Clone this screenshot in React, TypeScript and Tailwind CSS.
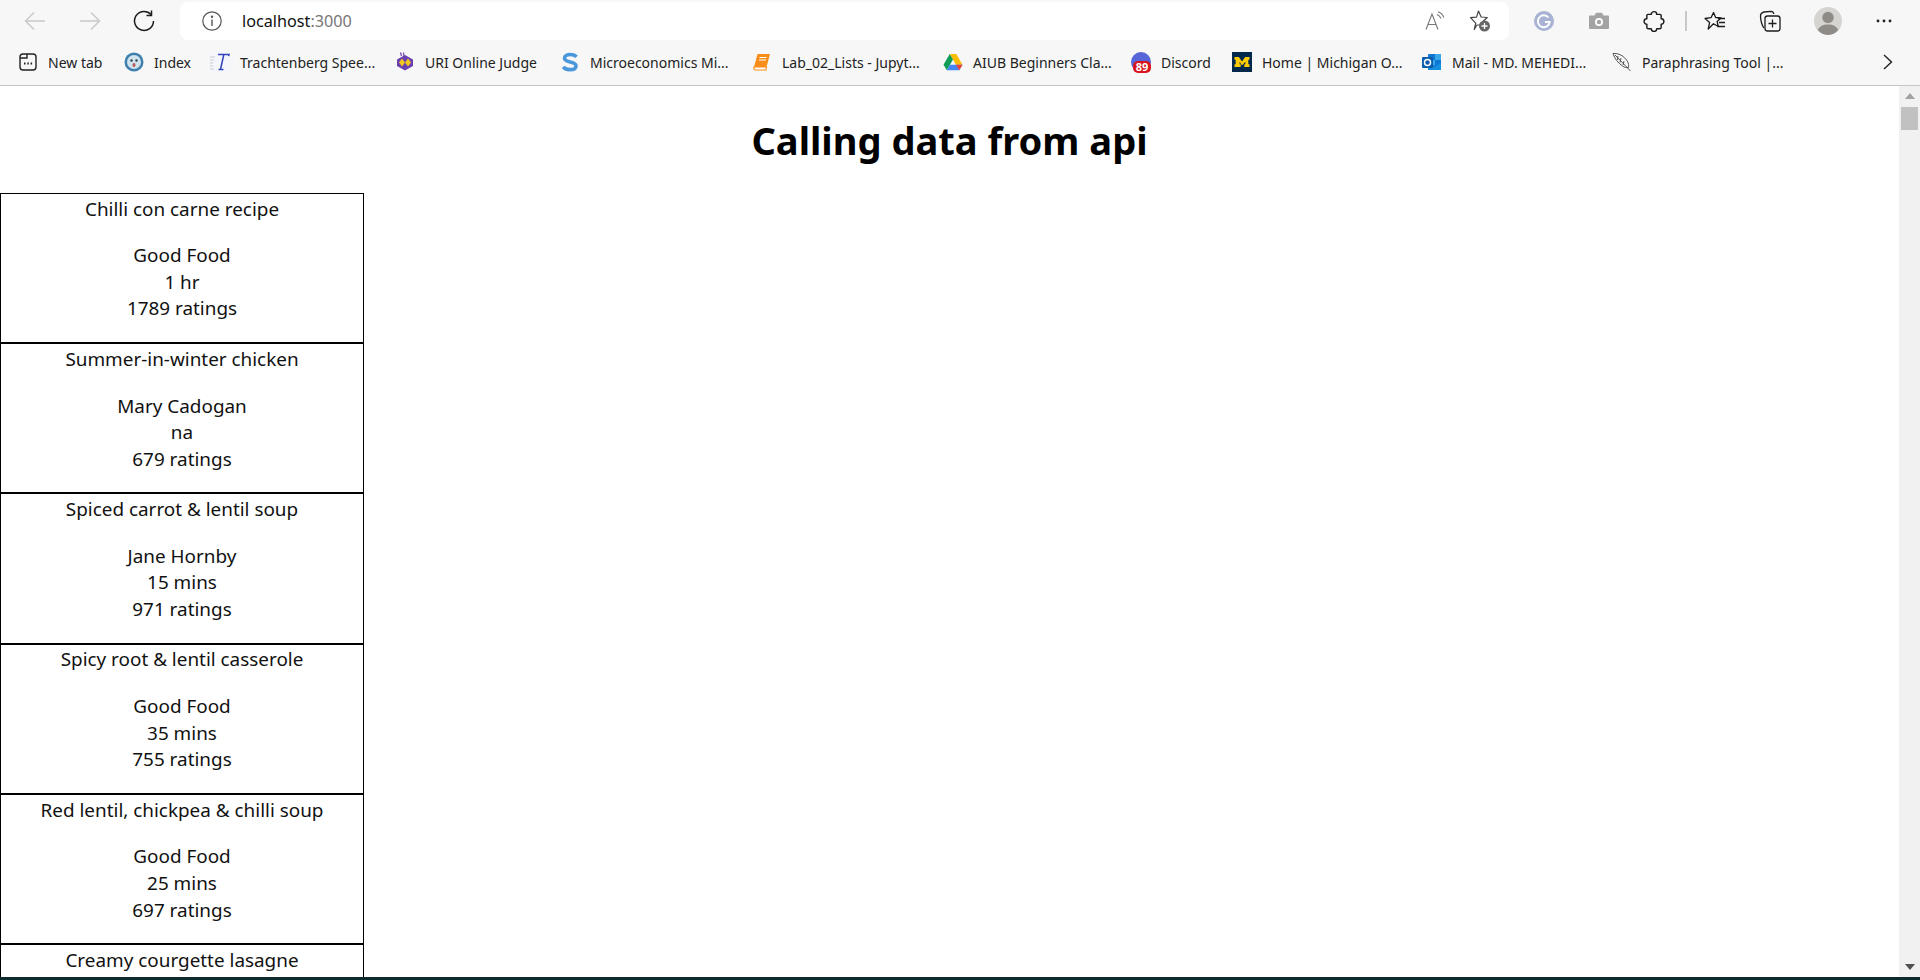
import React from "react";

const UI = { fontFamily: '"Noto Sans", "Open Sans", sans-serif' };

const Back = () => (
  <svg width="22" height="20" viewBox="0 0 22 20" fill="none" stroke="#c9c9c9" strokeWidth="1.4">
    <path d="M21 10H1.5M10 1.5L1.5 10l8.5 8.5" />
  </svg>
);
const Forward = () => (
  <svg width="22" height="20" viewBox="0 0 22 20" fill="none" stroke="#c9c9c9" strokeWidth="1.4">
    <path d="M1 10h19.5M12 1.5l8.5 8.5-8.5 8.5" />
  </svg>
);
const Reload = () => (
  <svg width="22" height="22" viewBox="0 0 22 22" fill="none" stroke="#1c1c1c" strokeWidth="1.5">
    <path d="M18 4.5A9.5 9.5 0 1 0 20.5 11" />
    <path d="M18.5 0.5v5h-5" />
  </svg>
);
const Info = () => (
  <svg width="20" height="20" viewBox="0 0 20 20" fill="none" stroke="#555" strokeWidth="1.2">
    <circle cx="10" cy="10" r="9.2" />
    <path d="M10 8.5v6.5" strokeWidth="1.4" />
    <circle cx="10" cy="5.8" r="0.6" fill="#555" />
  </svg>
);
const ReadAloud = () => (
  <svg width="20" height="20" viewBox="0 0 20 20" fill="none" stroke="#777" strokeWidth="1.1">
    <path d="M1 18.5L7 3l6 15.5M3 13.5h8" />
    <path d="M12 3.5c2 .8 3.2 2 4 4M13 0.8c2.8 1 4.8 3 5.8 5.8" />
  </svg>
);
const FavAdd = () => (
  <svg width="24" height="24" viewBox="0 0 24 24" fill="none">
    <path d="M10.5 2l2.6 6 6.2.5-4.7 4.2 1.3 3.3H9l-1 1.5-1.7 3 1.4-6.3L2.5 8.7l6-.6z" stroke="#444" strokeWidth="1.2" strokeLinejoin="round" />
    <circle cx="16.5" cy="17" r="5.5" fill="#666" />
    <path d="M16.5 14v6M13.5 17h6" stroke="#fff" strokeWidth="1.3" />
  </svg>
);
const Grammarly = () => (
  <svg width="20" height="20" viewBox="0 0 20 20" fill="none">
    <circle cx="10" cy="10" r="10" fill="#a8b2d4" />
    <path d="M14.5 6.5A6 6 0 1 0 15.8 11H11" stroke="#fff" strokeWidth="1.9" />
  </svg>
);
const Camera = () => (
  <svg width="20" height="18" viewBox="0 0 20 18">
    <path d="M1 3.5h4.5L7 .8h6l1.5 2.7H19a1 1 0 0 1 1 1V16a1 1 0 0 1-1 1H1a1 1 0 0 1-1-1V4.5a1 1 0 0 1 1-1z" fill="#a3a3a3" />
    <circle cx="10" cy="10" r="4" fill="#fff" />
    <circle cx="10" cy="10" r="2.2" fill="#a3a3a3" />
  </svg>
);
const Puzzle = () => (
  <svg width="22" height="22" viewBox="0 0 20 20" fill="none" stroke="#1c1c1c" strokeWidth="1.3" strokeLinejoin="round">
    <path d="M7.5 4a2.5 2.5 0 0 1 5 0h3a1 1 0 0 1 1 1v3a2.5 2.5 0 0 1 0 5v3a1 1 0 0 1-1 1h-3a2.5 2.5 0 0 1-5 0h-3a1 1 0 0 1-1-1v-3a2.5 2.5 0 0 1 0-5V5a1 1 0 0 1 1-1z" />
  </svg>
);
const Favorites = () => (
  <svg width="22" height="20" viewBox="0 0 22 20" fill="none" stroke="#1c1c1c" strokeWidth="1.3" strokeLinejoin="round">
    <path d="M9.5 1.5l2.2 5 5.3.5-3.9 3.5 1.2 5-4.8-2.8L4.2 18l1.4-6.4L1 7.5l6-.8z" />
    <path d="M14 7.5h7M15 11.5h6M13.5 15.5h7.5" />
  </svg>
);
const Collections = () => (
  <svg width="22" height="22" viewBox="0 0 22 22" fill="none" stroke="#1c1c1c" strokeWidth="1.3">
    <path d="M5 18C3 16 1.5 10 1.5 6c0-2 1.5-3.5 3.500-4l7-.7c1.500 0 2.500 1 2.800 2.700" />
    <rect x="6" y="6" width="15" height="15" rx="2.5" />
    <path d="M13.5 9.5v8M9.5 13.5h8" />
  </svg>
);
const Avatar = () => (
  <svg width="28" height="28" viewBox="0 0 28 28">
    <circle cx="14" cy="14" r="14" fill="#d6d4d1" />
    <circle cx="14" cy="10.5" r="5.7" fill="#8f8b87" />
    <path d="M3.8 23c1.5-3.5 5-5.5 10.2-5.5s8.700 2 10.200 5.500A14 14 0 0 1 14 28 14 14 0 0 1 3.800 23z" fill="#8f8b87" />
  </svg>
);
const Dots = () => (
  <svg width="16" height="4" viewBox="0 0 16 4" fill="#222">
    <circle cx="2" cy="2" r="1.4" />
    <circle cx="8" cy="2" r="1.4" />
    <circle cx="14" cy="2" r="1.4" />
  </svg>
);

const NewTabIcon = () => (
  <svg width="20" height="20" viewBox="0 0 20 20" fill="none" stroke="#222" strokeWidth="1.4">
    <rect x="2" y="2" width="16" height="16" rx="3" />
    <path d="M2 6h7V2" />
    <path d="M6 11.5h1.5M9.3 11.5h1.5M12.6 11.5h1.5" strokeWidth="1.8" />
  </svg>
);
const IndexIcon = () => (
  <svg width="20" height="20" viewBox="0 0 20 20">
    <circle cx="10" cy="10" r="9.5" fill="#3f7fae" />
    <circle cx="10" cy="10" r="7" fill="#cfe3ee" />
    <circle cx="7.5" cy="8.5" r="1.2" fill="#345" />
    <circle cx="12.5" cy="8.5" r="1.2" fill="#345" />
    <ellipse cx="10" cy="13" rx="1.5" ry="2" fill="#b55" />
  </svg>
);
const TIcon = () => (
  <svg width="20" height="20" viewBox="0 0 20 20">
    <rect width="20" height="20" fill="#f4f6fb" />
    <path d="M0 5h5M0 8h4M0 11h3M0 14h3M0 17h4" stroke="#ccc" strokeWidth="1" />
    <path d="M8 2.5h11l-.4 1.600M13.800 2.500L10.500 17.500M8.500 17.500h5" fill="none" stroke="#3344bb" strokeWidth="1.5" />
  </svg>
);
const UriIcon = () => (
  <svg width="20" height="20" viewBox="0 0 20 20">
    <path d="M10 3l8 4.5v6.500L10 18.500 2 14V7.500z" fill="#6a3fb0" />
    <path d="M7 6.500l-3 4 3 4 3-4zM13 6.500l-3 4 3 4 3-4z" fill="#f2c81f" />
    <path d="M5.500 0.500L6.500 4M8.500 0.500L9 4" stroke="#6a3fb0" strokeWidth="1.2" />
  </svg>
);
const SIcon = () => (
  <svg width="18" height="20" viewBox="0 0 18 20" fill="none">
    <path d="M15.500 4.800C14 3 12 2.500 9.300 2.500 6 2.500 3.500 3.800 3.500 6.200c0 5 11.500 2.600 11.500 7.700 0 2.500-2.700 3.700-6 3.700-2.900 0-5.300-.8-6.800-2.800" stroke="#4a98dc" strokeWidth="3.6" />
  </svg>
);
const BookIcon = () => (
  <svg width="18" height="18" viewBox="0 0 18 18">
    <path d="M4.500 1H17l-3.500 13H1z" fill="#f98d19" />
    <path d="M1 14h12.500L13 17H2.500C1 17 .5 15.500 1 14z" fill="#fff" stroke="#f98d19" strokeWidth="1.2" />
    <path d="M6.500 4.500h7M6 7h7" stroke="#fff" strokeWidth="1" />
  </svg>
);
const DriveIcon = () => (
  <svg width="20" height="18" viewBox="0 0 20 18">
    <path d="M6.700 1h6.600l6.200 10.800h-6.600z" fill="#fbbc04" />
    <path d="M6.700 1L.5 11.800l3.300 5.500L10 6.500z" fill="#0f9d58" />
    <path d="M3.800 17.300h12.400l3.300-5.500H7z" fill="#4285f4" />
    <path d="M16.200 17.300l3.300-5.500h-6.600z" fill="#ea4335" />
  </svg>
);
const DiscordIcon = () => (
  <span className="relative block w-[20px] h-[20px]">
    <span className="block w-[20px] h-[20px] rounded-full bg-[#5865d8]" />
    <span className="absolute left-[2px] top-[9px] w-[18px] h-[12px] rounded-[5px] bg-[#d9141e] text-white text-[11px] leading-[12px] font-bold text-center">
      89
    </span>
  </span>
);
const MichiganIcon = () => (
  <svg width="20" height="20" viewBox="0 0 20 20">
    <rect width="20" height="20" fill="#00274c" />
    <path d="M2.500 5h4.300L10 9.500 13.200 5h4.300v2.700h-1.200v4.600h1.200V15h-5.200v-2.700h1.100V9.800L10 13.500 7.600 9.800v2.500h1.100V15H2.500v-2.700h1.200V7.700H2.500z" fill="#ffcb05" />
  </svg>
);
const OutlookIcon = () => (
  <svg width="20" height="20" viewBox="0 0 20 20">
    <rect x="6" y="2" width="13" height="16" rx="1" fill="#0f78d4" />
    <rect x="13" y="2" width="6" height="6" fill="#38a8e8" />
    <rect x="6" y="8" width="7" height="5" fill="#38a8e8" />
    <path d="M6 11l6.500 4L19 11v7H6z" fill="#1490df" />
    <rect x="0" y="5" width="11" height="11" rx="1" fill="#0b5cab" />
    <circle cx="5.500" cy="10.500" r="3" fill="none" stroke="#fff" strokeWidth="1.5" />
  </svg>
);
const FeatherIcon = () => (
  <svg width="20" height="20" viewBox="0 0 20 20" fill="none" stroke="#444" strokeWidth="0.9">
    <path d="M1 1.500c5-.5 11 2 14.500 8 1 2 1.500 4 1 6-2 .5-4 0-6-1.500C6 11 2.500 6.500 1 1.500z" />
    <path d="M3 3l15.500 16M6 4l-.5 4M9 6l-1 4.500M12 9l-1 4" />
  </svg>
);

const bookmarks: { icon: React.ReactNode; label: string; width: string }[] = [
  { icon: <NewTabIcon />, label: "New tab", width: "w-[55px]" },
  { icon: <IndexIcon />, label: "Index", width: "w-[35px]" },
  { icon: <TIcon />, label: "Trachtenberg Spee...", width: "w-[134px]" },
  { icon: <UriIcon />, label: "URI Online Judge", width: "w-[114px]" },
  { icon: <SIcon />, label: "Microeconomics Mi...", width: "w-[141px]" },
  { icon: <BookIcon />, label: "Lab_02_Lists - Jupyt...", width: "w-[140px]" },
  { icon: <DriveIcon />, label: "AIUB Beginners Cla...", width: "w-[137px]" },
  { icon: <DiscordIcon />, label: "Discord", width: "w-[50px]" },
  { icon: <MichiganIcon />, label: "Home | Michigan O...", width: "w-[139px]" },
  { icon: <OutlookIcon />, label: "Mail - MD. MEHEDI...", width: "w-[139px]" },
  { icon: <FeatherIcon />, label: "Paraphrasing Tool |...", width: "w-[136px]" },
];

const recipes = [
  ["Chilli con carne recipe", "Good Food", "1 hr", "1789 ratings"],
  ["Summer-in-winter chicken", "Mary Cadogan", "na", "679 ratings"],
  ["Spiced carrot & lentil soup", "Jane Hornby", "15 mins", "971 ratings"],
  ["Spicy root & lentil casserole", "Good Food", "35 mins", "755 ratings"],
  ["Red lentil, chickpea & chilli soup", "Good Food", "25 mins", "697 ratings"],
];

const rowClass = "border border-black pt-[1.9px] text-center text-[18.9px] leading-[26.6px] text-[#111]";

export default function App() {
  return (
    <div className="w-[1920px] h-[980px] flex flex-col overflow-hidden bg-white text-black" style={UI}>
      <header className="h-[86px] shrink-0 bg-[#f7f7f7] border-b border-[#c6c6c6] flex flex-col">
        <div className="h-[42px] flex items-center">
          <div className="flex items-center gap-[33px] pl-[24px] w-[180px]">
            <Back />
            <Forward />
            <span className="-ml-[1px]"><Reload /></span>
          </div>
          <div className="w-[1329px] h-[38px] bg-white rounded-[8px] flex items-center pl-[22px] pr-[17px]">
            <Info />
            <span className="ml-[20px] text-[16.2px] text-[#111]">
              localhost<span className="text-[#777]">:3000</span>
            </span>
            <div className="ml-auto flex items-center gap-[23px]">
              <ReadAloud />
              <FavAdd />
            </div>
          </div>
          <div className="flex-1 flex items-center pl-[25px]">
            <Grammarly />
            <span className="ml-[35px]"><Camera /></span>
            <span className="ml-[34px]"><Puzzle /></span>
            <span className="ml-[20px] w-[2px] h-[20px] bg-[#c8c8c8]" />
            <span className="ml-[17px]"><Favorites /></span>
            <span className="ml-[33px]"><Collections /></span>
            <span className="ml-[33px]"><Avatar /></span>
            <span className="ml-[34px]"><Dots /></span>
          </div>
        </div>
        <div className="flex-1 flex items-center pl-[18px] pr-[27px] pb-[3px] text-[14px] text-[#222]">
          <div className="flex items-center gap-[21px]">
            {bookmarks.map((b) => (
              <div key={b.label} className="flex items-center gap-[10px]">
                <span className="w-[20px] h-[20px] flex items-center justify-center">{b.icon}</span>
                <span className={`${b.width} whitespace-nowrap`}>{b.label}</span>
              </div>
            ))}
          </div>
          <svg className="ml-auto" width="10" height="16" viewBox="0 0 10 16" fill="none" stroke="#222" strokeWidth="1.4">
            <path d="M1 1l7.5 7L1 15" />
          </svg>
        </div>
      </header>

      <div className="flex-1 min-h-0 flex">
        <main className="flex-1 min-w-0 overflow-hidden">
          <h1 className="text-center text-[38.1px] leading-[53.2px] font-bold mt-[27.8px] mb-[25.8px]">Calling data from api</h1>
          <div className="w-[364px]">
            {recipes.map((r) => (
              <div key={r[0]} className={rowClass}>
                <p className="mb-[20px]">{r[0]}</p>
                <p>{r[1]}</p>
                <p>{r[2]}</p>
                <p className="mb-[20px]">{r[3]}</p>
              </div>
            ))}
            <div className={rowClass}>
              <p className="mb-[20px]">Creamy courgette lasagne</p>
            </div>
          </div>
        </main>
        <aside className="w-[21px] shrink-0 bg-[#f1f1f1] flex flex-col items-center pt-[7px] pb-[7px]">
          <svg width="10" height="6" viewBox="0 0 10 6" fill="#a3a3a3"><path d="M5 0l5 6H0z" /></svg>
          <div className="mt-[8px] w-[17px] h-[23px] bg-[#c1c1c1]" />
          <svg className="mt-auto" width="10" height="6" viewBox="0 0 10 6" fill="#505050"><path d="M0 0h10L5 6z" /></svg>
        </aside>
      </div>
      <div className="h-[3px] shrink-0 bg-[#0f2a2e]" />
    </div>
  );
}
